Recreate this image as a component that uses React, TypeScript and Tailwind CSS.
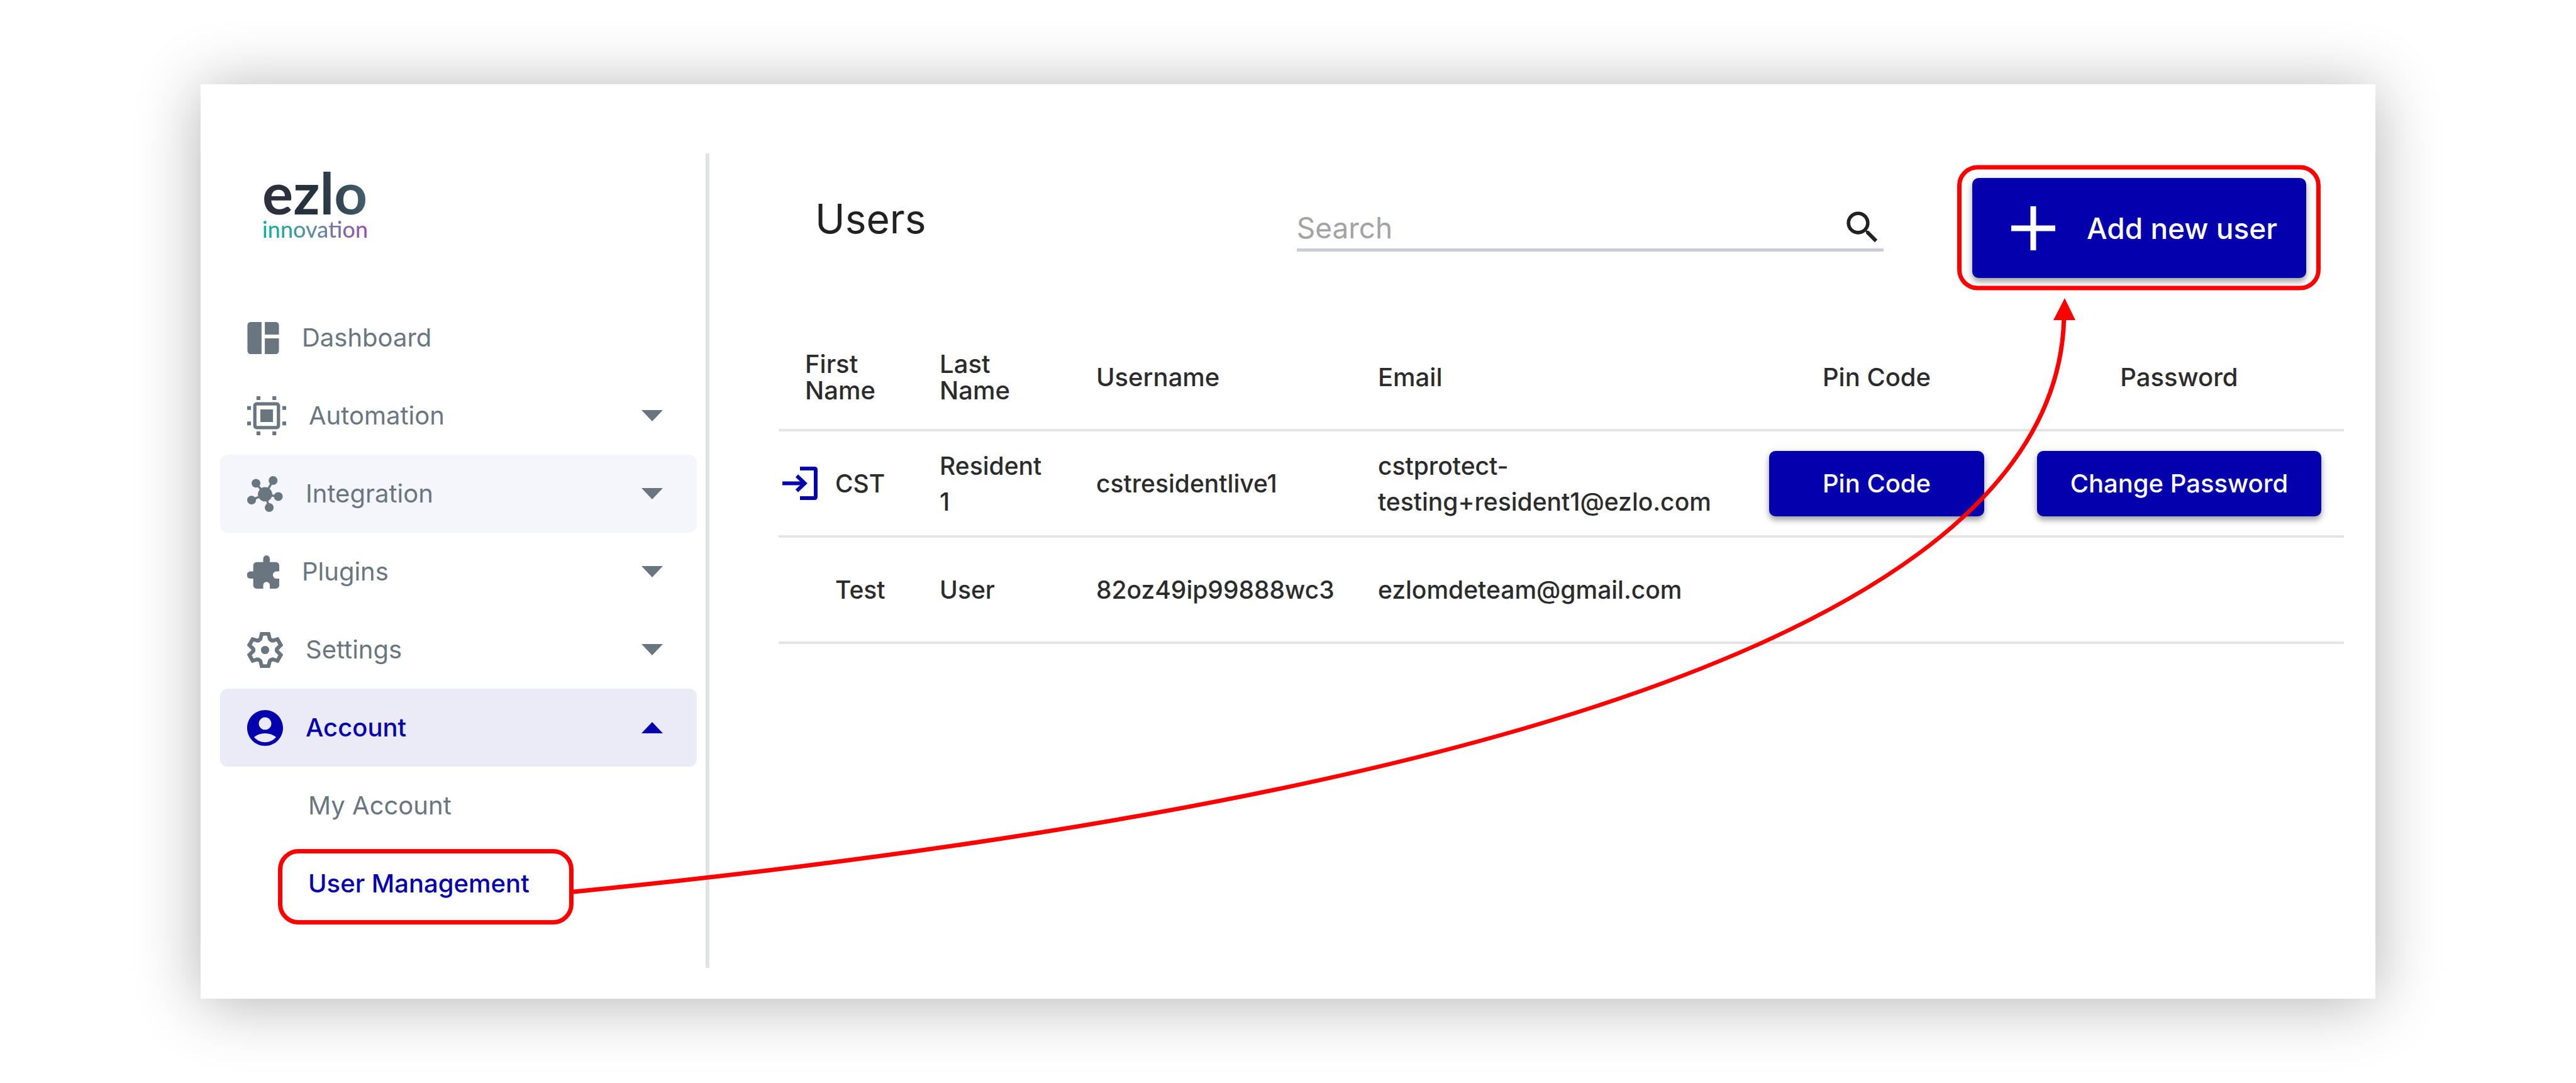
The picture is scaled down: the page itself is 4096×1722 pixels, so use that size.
import type { ReactNode } from "react";

const DashboardIcon = () => (
  <svg viewBox="0 0 58 59" className="w-[51px] h-[51px]" fill="currentColor" aria-hidden="true">
    <path d="M6 0H26V59H6a6 6 0 0 1-6-6V6a6 6 0 0 1 6-6Z" />
    <path d="M32 0H52a6 6 0 0 1 6 6V23H32Z" />
    <path d="M32 30H58V53a6 6 0 0 1-6 6H32Z" />
  </svg>
);

const AutomationIcon = () => (
  <svg viewBox="0 0 71 71" className="w-[62px] h-[62px]" fill="currentColor" aria-hidden="true">
    <rect x="14" y="14" width="43" height="43" rx="3" fill="none" stroke="currentColor" strokeWidth="6" />
    <rect x="24" y="24" width="23" height="23" />
    <path d="M17 0h7v7h-7zM46 0h7v7h-7zM17 64h7v7h-7zM46 64h7v7h-7z" />
    <path d="M0 18h7v7H0zM0 46h7v7H0zM64 18h7v7h-7zM64 46h7v7h-7z" />
  </svg>
);

const IntegrationIcon = () => (
  <svg viewBox="0 0 65 65" className="w-[57px] h-[57px]" fill="currentColor" aria-hidden="true">
    <path
      d="M32.500 33L16 13M32.500 33L47 8M32.500 33L8 43.500M32.500 33L56 37M32.500 33L40 56.500"
      stroke="currentColor"
      strokeWidth="4"
    />
    <circle cx="32.500" cy="33" r="13" />
    <circle cx="16" cy="13" r="8" />
    <circle cx="47" cy="8" r="8" />
    <circle cx="8" cy="43.500" r="8" />
    <circle cx="56.500" cy="37" r="8" />
    <circle cx="40" cy="57" r="8" />
  </svg>
);

const PluginsIcon = () => (
  <svg viewBox="0 0 58 60" className="w-[51px] h-[53px]" fill="currentColor" aria-hidden="true">
    <path d="M35 0a6 6 0 0 1 6 6V12H52a6 6 0 0 1 6 6V29H53a6.500 6.500 0 0 0 0 13H58V54a6 6 0 0 1-6 6H41V54a6 6 0 0 0-12 0V60H17a6 6 0 0 1-6-6V42H6a6 6 0 0 1 0-13H11V18a6 6 0 0 1 6-6H29V6a6 6 0 0 1 6-6Z" />
  </svg>
);

const SettingsIcon = () => (
  <svg viewBox="0 0 65 65" className="w-[57px] h-[57px]" fill="none" aria-hidden="true">
    <path
      d="M26.500 3H38.500L41 12.500Q43 15 46.500 15.500L55 13L61 23.500L54 30.500Q53 32.500 54 34.500L61 41.500L55 52L46.500 49.500Q43 50 41 52.500L38.500 62H26.500L24 52.500Q22 50 18.500 49.500L10 52L4 41.500L11 34.500Q12 32.500 11 30.500L4 23.500L10 13L18.500 15.500Q22 15 24 12.500Z"
      stroke="currentColor"
      strokeWidth="7"
    />
    <circle cx="32.500" cy="32.500" r="7.500" fill="currentColor" />
  </svg>
);

const AccountIcon = () => (
  <svg viewBox="2 2 20 20" className="w-[57px] h-[57px]" fill="currentColor" aria-hidden="true">
    <path d="M12 2C6.48 2 2 6.480 2 12s4.480 10 10 10 10-4.480 10-10S17.520 2 12 2zm0 4c1.930 0 3.500 1.570 3.500 3.500S13.930 13 12 13s-3.500-1.570-3.500-3.500S10.070 6 12 6zm0 14c-2.030 0-4.430-.82-6.140-2.880C7.550 15.800 9.680 15 12 15s4.450.8 6.140 2.120C16.430 19.180 14.030 20 12 20z" />
  </svg>
);

const LoginIcon = () => (
  <svg viewBox="0 0 56 53" className="w-14 h-[53px]" fill="none" stroke="#0400ad" strokeWidth="6" aria-hidden="true">
    <path d="M28 3H51Q53 3 53 5V48Q53 50 51 50H28" />
    <path d="M0 26.500H36" />
    <path d="M23 14.500L35.500 26.500L23 38.500" />
  </svg>
);

const SearchIcon = () => (
  <svg viewBox="0 0 24 24" className="w-[67px] h-[67px]" fill="#212121" aria-hidden="true">
    <path d="M15.500 14h-.79l-.28-.27A6.471 6.471 0 0 0 16 9.500 6.500 6.500 0 1 0 9.500 16c1.610 0 3.090-.59 4.230-1.570l.27.28v.79l5 4.990L20.490 19l-4.990-5zm-6 0C7.010 14 5 11.990 5 9.500S7.010 5 9.500 5 14 7.010 14 9.500 11.990 14 9.500 14z" />
  </svg>
);

type NavItem = {
  label: string;
  icon: ReactNode;
  state?: "hover" | "open";
  expandable?: boolean;
};

const NAV: NavItem[] = [
  { label: "Dashboard", icon: <DashboardIcon /> },
  { label: "Automation", icon: <AutomationIcon />, expandable: true },
  { label: "Integration", icon: <IntegrationIcon />, expandable: true, state: "hover" },
  { label: "Plugins", icon: <PluginsIcon />, expandable: true },
  { label: "Settings", icon: <SettingsIcon />, expandable: true },
  { label: "Account", icon: <AccountIcon />, expandable: true, state: "open" },
];

const NAV_STYLE = {
  idle: "text-[#697680]",
  hover: "text-[#697680] bg-[#f5f6fc]",
  open: "text-[#0400ad] bg-[#ebebf7] font-medium",
};

const USERS = [
  {
    first: "CST",
    last: "Resident 1",
    username: "cstresidentlive1",
    email: "cstprotect-testing+resident1@ezlo.com",
    managed: true,
  },
  {
    first: "Test",
    last: "User",
    username: "82oz49ip99888wc3",
    email: "ezlomdeteam@gmail.com",
    managed: false,
  },
];

const TH = "h-[169px] border-b-4 border-[#e4e4e4] font-medium leading-[42px] text-[40px]";
const TD = "h-[169px] border-b-4 border-[#e4e4e4] leading-[57px]";
const BUTTON =
  "bg-[#0400ad] text-white rounded-[10px] font-medium shadow-[0_6px_8px_rgba(0,0,0,0.3),0_2px_16px_rgba(0,0,0,0.12)]";

function Sidebar() {
  return (
    <aside className="w-[809px] shrink-0 mt-[110px] mb-[49px] pl-[31px] pr-[14px] border-r-[6px] border-[#e0e3e6]">
      <a href="#home" className="block w-fit mt-[21px] ml-[67px] font-['Lato',sans-serif]">
        <span className="block text-[92px] leading-[82px] font-bold text-transparent bg-clip-text bg-[linear-gradient(80deg,#2f2f3d_10%,#22323b_50%,#4a6674_100%)]">
          ezlo
        </span>
        <span className="block text-[36px] leading-[35px] font-medium text-transparent bg-clip-text bg-[linear-gradient(90deg,#00b894,#5b8fa3_45%,#9b4fae)]">
          innovation
        </span>
      </a>

      <nav className="mt-[93px] text-[40px]">
        <ul>
          {NAV.map((item) => (
            <li key={item.label}>
              <button
                type="button"
                className={`w-full h-[124px] flex items-center gap-9 pl-[43px] pr-[54px] rounded-[12px] ${NAV_STYLE[item.state ?? "idle"]}`}
              >
                {item.icon}
                {item.label}
                {item.expandable && (
                  <svg viewBox="0 0 34 18" className="w-[34px] h-[18px] ml-auto" fill="currentColor" aria-hidden="true">
                    <path d={item.state === "open" ? "M0 18L17 0L34 18Z" : "M0 0H34L17 18Z"} />
                  </svg>
                )}
              </button>
            </li>
          ))}
          <li>
            <a href="#my-account" className="h-[124px] flex items-center pl-[140px] text-[#697680]">
              My Account
            </a>
          </li>
          <li>
            <a href="#user-management" className="h-[124px] flex items-center pl-[140px] text-[#0400ad] font-medium">
              User Management
            </a>
          </li>
        </ul>
      </nav>
    </aside>
  );
}

function UsersTable() {
  return (
    <table className="mt-[75px] w-full table-fixed border-separate border-spacing-0 text-left font-medium text-[#2b2b2b]">
      <colgroup>
        <col className="w-[8.6%]" />
        <col className="w-[10%]" />
        <col className="w-[18%]" />
        <col className="w-[25%]" />
        <col className="w-[17.1%]" />
        <col />
      </colgroup>
      <thead>
        <tr>
          <th className={`${TH} px-[42px]`}>First Name</th>
          <th className={`${TH} px-[42px]`}>Last Name</th>
          <th className={`${TH} px-[42px]`}>Username</th>
          <th className={`${TH} px-[42px]`}>Email</th>
          <th className={`${TH} px-[42px] text-center`}>Pin Code</th>
          <th className={`${TH} pl-[42px] pr-9 text-center`}>Password</th>
        </tr>
      </thead>
      <tbody>
        {USERS.map((user) => (
          <tr key={user.username}>
            <td className={`${TD} pl-[6px]`}>
              <div className="flex items-center gap-7">
                {user.managed ? <LoginIcon /> : <span className="w-14" />}
                {user.first}
              </div>
            </td>
            <td className={`${TD} pl-[42px] pr-9`}>{user.last}</td>
            <td className={`${TD} pl-[42px]`}>{user.username}</td>
            <td className={`${TD} pl-[42px]`}>{user.email}</td>
            <td className={`${TD} px-[42px]`}>
              {user.managed && (
                <button type="button" className={`${BUTTON} block w-full h-[104px] text-[40px]`}>
                  Pin Code
                </button>
              )}
            </td>
            <td className={`${TD} pl-[42px] pr-9`}>
              {user.managed && (
                <button type="button" className={`${BUTTON} block w-full h-[104px] text-[40px]`}>
                  Change Password
                </button>
              )}
            </td>
          </tr>
        ))}
      </tbody>
    </table>
  );
}

/* Red highlights and the arrow that leads from the menu entry to the button */
function Annotations() {
  return (
    <svg
      viewBox="0 0 4096 1722"
      className="absolute inset-0 w-full h-full pointer-events-none"
      fill="none"
      stroke="#ff0000"
      strokeWidth="7"
      aria-hidden="true"
    >
      <rect x="445.500" y="1353.500" width="463" height="113" rx="29" />
      <rect x="3115.500" y="266" width="571" height="192" rx="29" />
      <path d="M912 1418Q3282 1181 3282 496" />
      <path d="M3283 474L3300 509H3265Z" fill="#ff0000" stroke="none" />
    </svg>
  );
}

export default function App() {
  return (
    <div className="relative min-h-screen flex bg-white px-[319px] py-[134px] font-['Inter',sans-serif] text-[39px] leading-[48px]">
      <div className="flex-1 flex bg-white shadow-[0_6px_96px_rgba(0,0,0,0.3)]">
        <Sidebar />

        <main className="flex-1 min-w-0 pt-[149px] pl-[110px] pr-[50px]">
          <header className="flex items-start">
            <h1 className="flex-1 mt-[33px] pl-[58px] text-[64px] leading-[64px] text-[#212121]">Users</h1>
            <div className="w-[37.5%] mt-[45px] flex items-center border-b-[5px] border-[#c8ced8]">
              <input
                type="search"
                aria-label="Search"
                placeholder="Search"
                className="flex-1 min-w-0 text-[46px] leading-[60px] outline-none placeholder:text-[#a3a3a3]"
              />
              <button type="button" aria-label="Submit search">
                <SearchIcon />
              </button>
            </div>
            <button
              type="button"
              className={`${BUTTON} ml-[141px] mr-[60px] w-[531px] h-[159px] flex items-center pl-[62px] gap-[50px] text-[46px]`}
            >
              <svg viewBox="0 0 70 70" className="w-[70px] h-[70px]" stroke="currentColor" strokeWidth="9" aria-hidden="true">
                <path d="M35 0V70M0 35H70" />
              </svg>
              Add new user
            </button>
          </header>

          <UsersTable />
        </main>
      </div>

      <Annotations />
    </div>
  );
}
